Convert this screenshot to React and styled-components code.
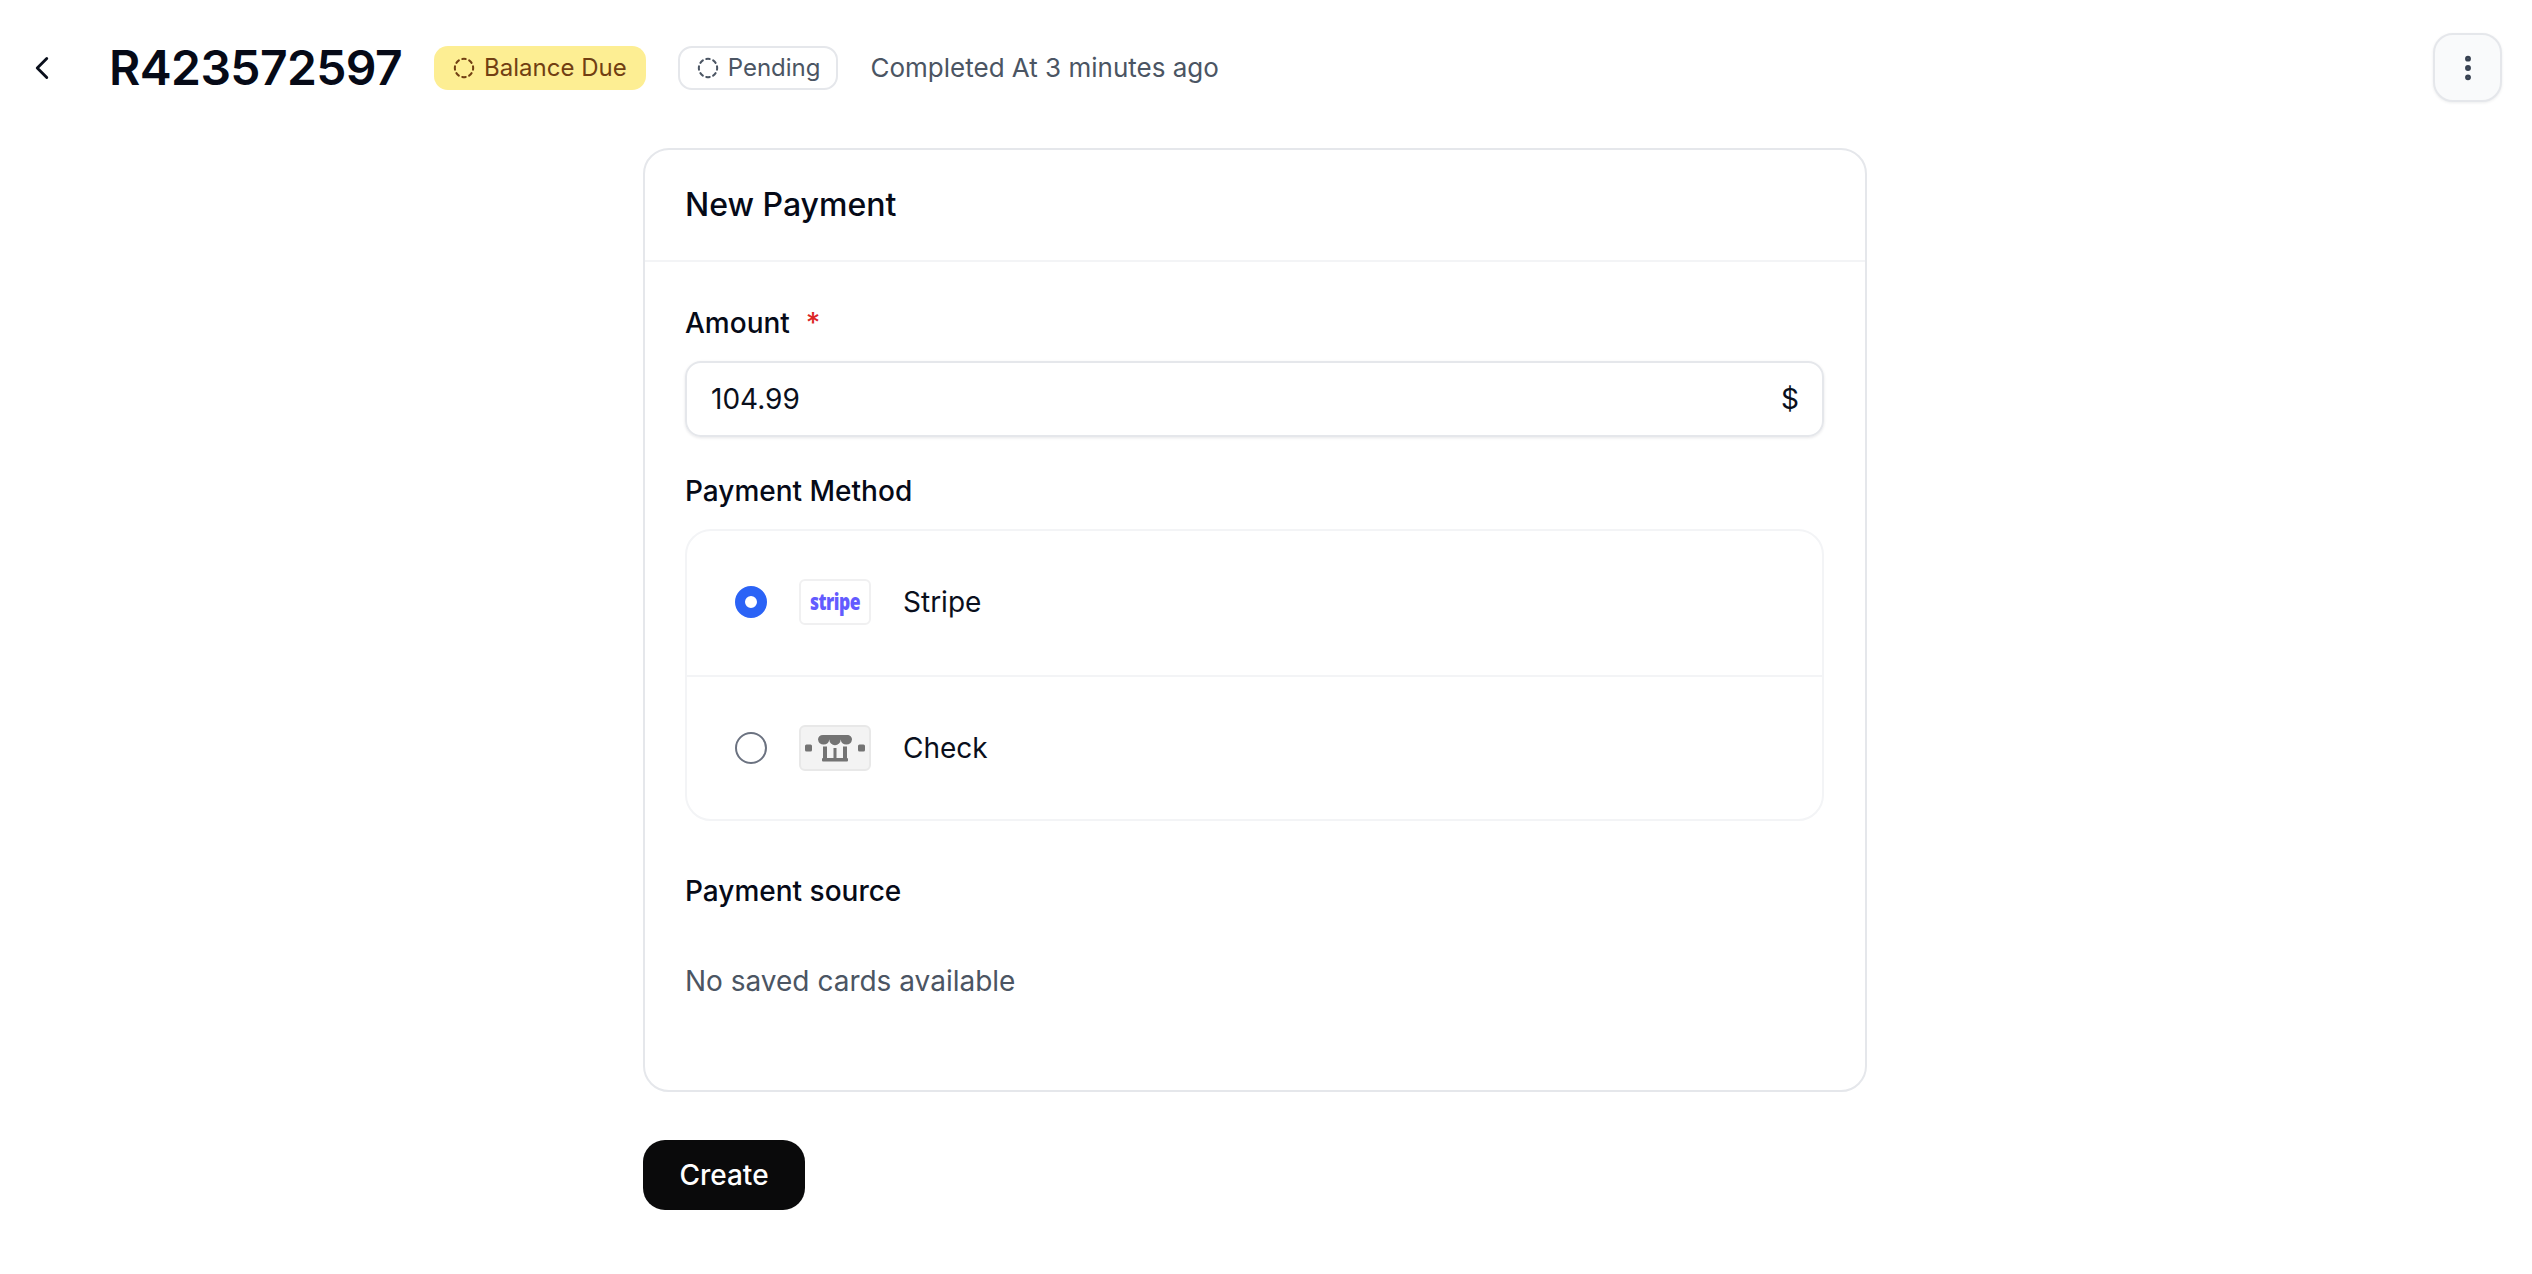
import React from 'react';
import styled, { createGlobalStyle } from 'styled-components';
import { ChevronLeft, CircleDashed, EllipsisVertical } from 'lucide-react';

const Global = createGlobalStyle`
  html, body { margin: 0; padding: 0; background: #fff; }
  body { font-family: Inter, "Liberation Sans", sans-serif; color: #0a0f1c; }
  * { box-sizing: border-box; }
`;

const Page = styled.div`
  min-height: 1274px;
  background: #fff;
`;

const Header = styled.header`
  display: flex;
  align-items: center;
  padding: 33px 30px 0 23px;
  height: 102px;
`;

const BackButton = styled.button`
  display: flex;
  width: 38px;
  height: 38px;
  padding: 0;
  border: 0;
  background: none;
  color: #0a0f1c;
  margin-right: 48px;
`;

const Title = styled.h1`
  margin: 0 32px 0 0;
  font-size: 48px;
  line-height: 68px;
  font-weight: 600;
  letter-spacing: -0.6px;
  color: #060a17;
`;

const Badge = styled.span`
  display: inline-flex;
  align-items: center;
  gap: 9px;
  height: 44px;
  margin-right: 32px;
  border-radius: 14px;
  font-size: 24px;
  font-weight: 400;
  background: ${p => (p.$tone === 'warn' ? '#fdee93' : '#fff')};
  color: ${p => (p.$tone === 'warn' ? '#713f12' : '#4b5563')};
  border: ${p => (p.$tone === 'warn' ? '0' : '2px solid #e5e7eb')};
  padding: ${p => (p.$tone === 'warn' ? '0 19px' : '0 16px 0 17px')};
`;

const Meta = styled.span`
  font-size: 26px;
  color: #4b5563;
  flex: 1;
`;

const MenuButton = styled.button`
  display: flex;
  align-items: center;
  justify-content: center;
  width: 69px;
  height: 69px;
  padding: 0;
  border: 2px solid #e5e7eb;
  border-radius: 20px;
  background: #f9fafb;
  color: #374151;
  box-shadow: 0 1px 3px rgba(16, 24, 40, 0.08);
`;

const Main = styled.main`
  width: 1867px;
  padding: 46px 0 0 643px;
`;

const Card = styled.section`
  border: 2px solid #e5e7eb;
  border-radius: 26px;
  background: #fff;
  height: 944px;
`;

const CardHeader = styled.div`
  height: 112px;
  display: flex;
  align-items: center;
  padding: 0 40px;
  border-bottom: 2px solid #f3f4f6;
`;

const CardTitle = styled.h2`
  margin: 0;
  font-size: 32px;
  line-height: 44px;
  font-weight: 500;
  color: #060a17;
`;

const CardBody = styled.div`
  padding: 41px 41px 0 40px;
`;

const Label = styled.label`
  display: block;
  font-size: 28px;
  line-height: 41px;
  font-weight: 500;
  color: #060a17;
  margin: ${p => p.$mt || 0}px 0 ${p => p.$mb || 0}px;
`;

const Required = styled.span`
  color: #dc2626;
  margin-left: 16px;
`;

const AmountField = styled.div`
  display: flex;
  align-items: center;
  justify-content: space-between;
  height: 76px;
  padding: 0 23px 0 24px;
  border: 2px solid #e5e7eb;
  border-radius: 16px;
  box-shadow: 0 1px 3px rgba(16, 24, 40, 0.1);
  font-size: 28px;
  color: #0a0f1c;
`;

const MethodGroup = styled.div`
  border: 2px solid #f3f4f6;
  border-radius: 26px;
  height: 292px;
`;

const MethodRow = styled.div`
  display: flex;
  align-items: center;
  height: 144px;
  padding: 0 0 2px 48px;
  & + & {
    padding-bottom: 0;
    border-top: 2px solid #f3f4f6;
  }
`;

const Radio = styled.span`
  flex: none;
  width: 32px;
  height: 32px;
  border-radius: 50%;
  margin-right: 32px;
  background: #fff;
  border: ${p => (p.$on ? '10.5px solid #2b63f6' : '2px solid #6b7280')};
`;

const Logo = styled.span`
  flex: none;
  display: flex;
  align-items: center;
  justify-content: center;
  width: 72px;
  height: 46px;
  margin-right: 32px;
  border: 2px solid ${p => (p.$muted ? '#e8e8e8' : '#f0f0f1')};
  border-radius: 6px;
  background: ${p => (p.$muted ? '#f3f3f3' : '#fff')};
`;

const StripeMark = styled.span`
  font-family: "Open Sans", sans-serif;
  font-size: 23px;
  font-weight: 800;
  letter-spacing: -0.6px;
  line-height: 1;
  color: #635bff;
  transform: scaleX(0.76) translateY(-1px);
`;

const MethodName = styled.span`
  font-size: 28px;
  color: #0a0f1c;
`;

const EmptyText = styled.p`
  margin: 49px 0 0;
  font-size: 28px;
  line-height: 41px;
  color: #4b5563;
`;

const CreateButton = styled.button`
  display: block;
  margin-top: 48px;
  width: 162px;
  height: 70px;
  padding: 0;
  border: 0;
  border-radius: 22px;
  background: #0a0a0b;
  color: #fff;
  font-family: inherit;
  font-size: 28px;
  font-weight: 500;
`;

const StoreIcon = () => (
  <svg width="60" height="30" viewBox="0 0 60 30" fill="#737373" aria-hidden="true">
    <rect x="0" y="11.5" width="7" height="7" rx="1.5" />
    <rect x="53" y="11.5" width="7" height="7" rx="1.5" />
    <path d="M18 2H42C45 2 47 4 47 6.5A5.7 5.7 0 0 1 35.7 6.5A5.7 5.7 0 0 1 24.3 6.5A5.7 5.7 0 0 1 13 6.5C13 4 15 2 18 2Z" />
    <rect x="18" y="13.5" width="4" height="12" />
    <rect x="28.5" y="15" width="3" height="10.5" />
    <rect x="38" y="13.5" width="4" height="12" />
    <rect x="17" y="25" width="26" height="3.5" rx="1" />
  </svg>
);

export default function App() {
  return (
    <Page>
      <Global />
      <Header>
        <BackButton aria-label="Back">
          <ChevronLeft size={38} strokeWidth={1.8} />
        </BackButton>
        <Title>R423572597</Title>
        <Badge $tone="warn"><CircleDashed size={22} strokeWidth={2.2} />Balance Due</Badge>
        <Badge><CircleDashed size={22} strokeWidth={2.2} />Pending</Badge>
        <Meta>Completed At 3 minutes ago</Meta>
        <MenuButton aria-label="More">
          <EllipsisVertical size={32} strokeWidth={2.4} />
        </MenuButton>
      </Header>
      <Main>
        <Card>
          <CardHeader>
            <CardTitle>New Payment</CardTitle>
          </CardHeader>
          <CardBody>
            <Label $mb={17}>Amount<Required>*</Required></Label>
            <AmountField><span>104.99</span><span>$</span></AmountField>
            <Label $mt={34} $mb={17}>Payment Method</Label>
            <MethodGroup>
              <MethodRow>
                <Radio $on />
                <Logo><StripeMark>stripe</StripeMark></Logo>
                <MethodName>Stripe</MethodName>
              </MethodRow>
              <MethodRow>
                <Radio />
                <Logo $muted><StoreIcon /></Logo>
                <MethodName>Check</MethodName>
              </MethodRow>
            </MethodGroup>
            <Label $mt={50}>Payment source</Label>
            <EmptyText>No saved cards available</EmptyText>
          </CardBody>
        </Card>
        <CreateButton>Create</CreateButton>
      </Main>
    </Page>
  );
}
